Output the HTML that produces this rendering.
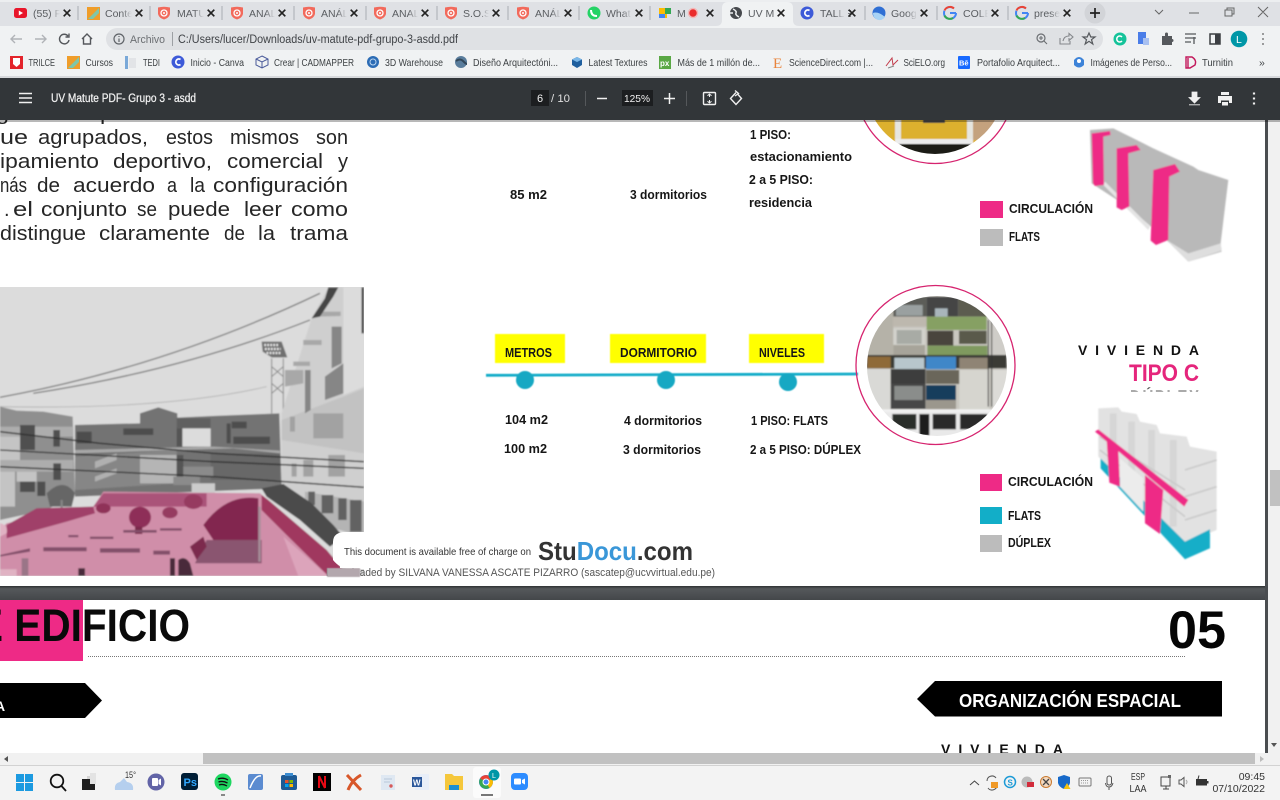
<!DOCTYPE html>
<html><head><meta charset="utf-8"><title>UV Matute PDF</title>
<style>
html,body{margin:0;padding:0;width:1280px;height:800px;overflow:hidden;background:#fff}
svg{display:block;position:absolute;left:0;top:0}
text{font-family:"Liberation Sans",sans-serif;white-space:pre}
.tab{font-size:10.5px;fill:#5a5d61}
.bm{font-size:10.5px;fill:#3c4043}
.b{font-weight:bold;font-size:13px;fill:#161616}
.w{font-size:20px;fill:#262626}
</style></head><body>
<svg width="1280" height="800" viewBox="0 0 1280 800" xmlns="http://www.w3.org/2000/svg">
<defs>
<linearGradient id="fd" x1="0" y1="0" x2="1" y2="0"><stop offset="0" stop-color="#dfe1e5" stop-opacity="0"/><stop offset="1" stop-color="#dfe1e5"/></linearGradient>
<g id="x"><path d="M-3.3-3.3L3.3 3.3M3.3-3.3L-3.3 3.3" stroke="#222" stroke-width="1.7" fill="none"/></g>
<g id="xf"><rect x="-17" y="-8" width="10" height="16" fill="url(#fd)"/><rect x="-7" y="-8" width="3" height="16" fill="#dfe1e5"/><use href="#x"/></g>
<g id="sh"><path d="M-6-5.5Q0-7 6-5.5V1Q5 5 0 6.5Q-5 5-6 1Z" fill="#f26a5c"/><circle r="3" fill="none" stroke="#fff" stroke-width="1.3"/><circle r="1" fill="#fff"/></g>
<g id="G"><circle r="6" fill="none" stroke="#4285f4" stroke-width="2" stroke-dasharray="9 3 9 3 8 6"/><path d="M0 0H6" stroke="#4285f4" stroke-width="2"/><path d="M-5.5-2.5A6 6 0 0 1 4-4.5" stroke="#ea4335" stroke-width="2" fill="none"/><path d="M-5.5 2.5A6 6 0 0 0 3 5" stroke="#34a853" stroke-width="2" fill="none"/></g>
<clipPath id="cC"><circle cx="937" cy="366" r="70"/></clipPath>
<clipPath id="cA"><circle cx="935" cy="84" r="70"/></clipPath>
<clipPath id="cP"><rect x="0" y="287" width="364" height="289"/></clipPath>
<clipPath id="cD"><rect x="1100" y="385" width="110" height="6.500"/></clipPath>
<filter id="bl" x="-5%" y="-5%" width="110%" height="110%"><feGaussianBlur stdDeviation="2.4"/></filter>
<filter id="bs" x="-5%" y="-5%" width="110%" height="110%"><feGaussianBlur stdDeviation="0.5"/></filter>
<linearGradient id="gap" x1="0" y1="0" x2="0" y2="1"><stop offset="0" stop-color="#2e3133"/><stop offset=".2" stop-color="#55585b"/><stop offset="1" stop-color="#44474a"/></linearGradient>
</defs>

<!-- PDF page 1 -->
<rect x="0" y="120" width="1280" height="640" fill="#fff"/>
<!-- left paragraph -->
<g>
<text class="w" x="-4" y="120" textLength="86" lengthAdjust="spacingAndGlyphs">generan</text><text class="w" x="100" y="120" textLength="34" lengthAdjust="spacingAndGlyphs">por</text><text class="w" x="148" y="120" textLength="16" lengthAdjust="spacingAndGlyphs">la</text><text class="w" x="178" y="120" textLength="96" lengthAdjust="spacingAndGlyphs">obtención</text><text class="w" x="288" y="120" textLength="22" lengthAdjust="spacingAndGlyphs">de</text><text class="w" x="322" y="120" textLength="26" lengthAdjust="spacingAndGlyphs">los</text>
<text class="w" x="0" y="144" textLength="28" lengthAdjust="spacingAndGlyphs">ue</text><text class="w" x="38" y="144" textLength="110" lengthAdjust="spacingAndGlyphs">agrupados,</text><text class="w" x="166" y="144" textLength="47" lengthAdjust="spacingAndGlyphs">estos</text><text class="w" x="230" y="144" textLength="69" lengthAdjust="spacingAndGlyphs">mismos</text><text class="w" x="316" y="144" textLength="32" lengthAdjust="spacingAndGlyphs">son</text>
<text class="w" x="0" y="168" textLength="99" lengthAdjust="spacingAndGlyphs">ipamiento</text><text class="w" x="113" y="168" textLength="99" lengthAdjust="spacingAndGlyphs">deportivo,</text><text class="w" x="227" y="168" textLength="96" lengthAdjust="spacingAndGlyphs">comercial</text><text class="w" x="338" y="168" textLength="10" lengthAdjust="spacingAndGlyphs">y</text>
<text class="w" x="0" y="192" textLength="27" lengthAdjust="spacingAndGlyphs">nás</text><text class="w" x="37" y="192" textLength="23" lengthAdjust="spacingAndGlyphs">de</text><text class="w" x="73" y="192" textLength="82" lengthAdjust="spacingAndGlyphs">acuerdo</text><text class="w" x="167" y="192" textLength="10" lengthAdjust="spacingAndGlyphs">a</text><text class="w" x="190" y="192" textLength="15" lengthAdjust="spacingAndGlyphs">la</text><text class="w" x="213" y="192" textLength="135" lengthAdjust="spacingAndGlyphs">configuración</text>
<text class="w" x="4" y="216">.</text><text class="w" x="13" y="216" textLength="20" lengthAdjust="spacingAndGlyphs">el</text><text class="w" x="41" y="216" textLength="86" lengthAdjust="spacingAndGlyphs">conjunto</text><text class="w" x="137" y="216" textLength="20" lengthAdjust="spacingAndGlyphs">se</text><text class="w" x="168" y="216" textLength="62" lengthAdjust="spacingAndGlyphs">puede</text><text class="w" x="244" y="216" textLength="38" lengthAdjust="spacingAndGlyphs">leer</text><text class="w" x="291" y="216" textLength="57" lengthAdjust="spacingAndGlyphs">como</text>
<text class="w" x="0" y="240" textLength="86" lengthAdjust="spacingAndGlyphs">distingue</text><text class="w" x="99" y="240" textLength="111" lengthAdjust="spacingAndGlyphs">claramente</text><text class="w" x="224" y="240" textLength="21" lengthAdjust="spacingAndGlyphs">de</text><text class="w" x="258" y="240" textLength="17" lengthAdjust="spacingAndGlyphs">la</text><text class="w" x="290" y="240" textLength="58" lengthAdjust="spacingAndGlyphs">trama</text>
</g>

<!-- photo -->
<g clip-path="url(#cP)"><g transform="translate(0 280) scale(.3333)" filter="url(#bl)">
<rect x="-20" y="0" width="1140" height="910" fill="#dcdcdc"/>
<path d="M0 352Q500 260 960 40M100 340Q550 270 930 120" fill="none" stroke="#6d6d6d" stroke-width="3.500"/>
<path d="M0 380Q500 390 800 320" fill="none" stroke="#b0b0b0" stroke-width="2.500"/>
<!-- tower -->
<path d="M785 185H845L862 232H815L788 215Z" fill="#6f6f6f"/><path d="M793 195H838M795 207H842M800 219H845" stroke="#f2f2f2" stroke-width="7" stroke-dasharray="5 4"/>
<path d="M815 235L815 400M850 235L850 400M815 260L850 290M850 260L815 290M815 310L850 340M850 310L815 340" stroke="#888" stroke-width="3" fill="none"/>
<!-- left building -->
<path d="M0 380L50 392 130 395 218 410 225 640 140 690 0 720Z" fill="#8f8f8f"/>
<path d="M0 440H220V470H0ZM0 540H220V575H0Z" fill="#adadad"/><path d="M0 470H60V540H0ZM50 575H110V605H50ZM0 575H45V680H0Z" fill="#c4c4c4"/>
<path d="M60 435H105V510H60ZM160 450H180V500H160ZM160 550H183V600H160ZM112 605H136V648H112ZM60 605H105V636H60Z" fill="#505050"/>
<!-- center -->
<path d="M225 435L420 430V400L475 382 532 400V413L640 408 838 400 845 625 225 650Z" fill="#737373"/>
<path d="M225 530L530 510V610L225 630Z" fill="#868686"/><path d="M420 525H530V610H420Z" fill="#b5b5b5"/>
<path d="M530 415H632V445H530Z" fill="#606060"/><path d="M547 445H632V500H547Z" fill="#dcdcdc"/>
<path d="M530 445H547V500H530ZM530 525H550V590H530Z" fill="#555"/>
<path d="M632 520H840V600H632Z" fill="#686868"/><path d="M700 470H810V492H700ZM695 425H740V445H695ZM370 445H460V465H370ZM230 455H275V490H230ZM680 430H692V490H680Z" fill="#4e4e4e"/>
<path d="M225 520L700 505 840 520V512L640 500 225 510Z" fill="#a8a8a8"/>
<path d="M285 545L350 520V540L285 565ZM285 590L350 565V580L285 605Z" fill="#b0b0b0"/>
<path d="M520 590H600V615H520ZM550 560H640V590H550Z" fill="#8b8b8b"/><rect x="575" y="610" width="70" height="30" fill="#ccc"/>
<!-- right building -->
<path d="M845 400L935 115 985 22H1092V770L980 730 845 620Z" fill="#cfcfcf"/>
<path d="M1030 22H1092V320L1030 345Z" fill="#dcdcdc"/><path d="M1030 350L1092 325V520L845 480V420Z" fill="#c2c2c2"/>
<path d="M995 140H1025V250L995 265ZM915 270H932V390L915 400ZM975 290L1030 250V340L975 360Z" fill="#868686"/>
<path d="M950 95H1022V108L950 110ZM910 180H965V195H910ZM880 245H930V258H880ZM855 270H910V310L855 320Z" fill="#a8a8a8"/>
<path d="M935 115L975 55 985 22H1015L1000 50 960 110Z" fill="#444"/><path d="M1085 22H1092V160H1085Z" fill="#333"/>
<path d="M985 525H1035V590H985ZM940 400H1030V475H940ZM870 410H885V455H870ZM910 540H940V590H910ZM875 550H890V590H875Z" fill="#a2a2a2"/>
<path d="M915 635L1092 665V770L1000 745 915 690Z" fill="#b4b4b4"/><path d="M1015 655H1040V720H1015ZM1050 660H1085V755H1050ZM965 645H1000V700H965ZM925 635H945V675H925Z" fill="#626262"/>
<path d="M0 455L300 490 640 520 1092 545M0 510L640 545 1092 565M0 560L640 590 1092 622" fill="none" stroke="#2e2e2e" stroke-width="4"/>
<!-- shrubs next to building -->
<path d="M785 625L850 612 935 670 1000 735 1030 770 990 800 900 720 800 650Z" fill="#4b4b4b"/>
<path d="M140 640Q190 590 225 640L215 680H150Z" fill="#666"/><rect x="182" y="660" width="6" height="120" fill="#888"/>
<!-- plaza -->
<path d="M0 750L20 730 280 680 310 635 780 640 870 720 1000 850 1045 888H0Z" fill="#d08ea9"/>
<path d="M310 640H620V680H280Z" fill="#aa5379"/>
<path d="M20 735L110 685 280 680 285 700 200 725 20 775Z" fill="#a03f69"/>
<path d="M785 645L805 660 980 810 1045 888H985L860 765 785 690Z" fill="#a0395f"/>
<path d="M850 770L985 888H895Z" fill="#dca4bb"/>
<ellipse cx="420" cy="712" rx="33" ry="32" fill="#8e2f58"/><rect x="405" y="740" width="22" height="22" fill="#7a2a4c"/>
<ellipse cx="510" cy="698" rx="23" ry="17" fill="#963a61"/><ellipse cx="580" cy="665" rx="28" ry="22" fill="#963a61"/>
<ellipse cx="310" cy="685" rx="22" ry="15" fill="#8f3159"/>
<path d="M610 735Q680 640 775 655V780H640Z" fill="#822650"/><path d="M620 780H785V850H585Z" fill="#8a5570"/>
<path d="M570 800L610 770 620 800 590 840Z" fill="#7c2a4e"/>
<path d="M130 802H260V814H130ZM300 805H420V818H300ZM370 750H470V758H370ZM205 765H235V772H205ZM270 770H340V777H270ZM460 812H510V824H460ZM480 745H545V752H480ZM0 825L90 805V815L0 830Z" fill="#83506a"/>
<rect x="775" y="680" width="7" height="165" fill="#a68f9a"/>
<path d="M510 835H525V888H510ZM535 840Q555 825 570 850L580 888H535ZM235 865H255V888H235Z" fill="#4a2c3a"/>
<path d="M0 730Q25 735 20 760L0 770ZM0 830V888H50V868H0Z" fill="#e0b2c3"/><rect x="65" y="835" width="20" height="53" fill="#9a7587"/>
</g></g>

<!-- timeline -->
<g filter="url(#bs)">
<rect x="495" y="334" width="70" height="29" fill="#ffff00"/><rect x="610" y="334" width="96" height="29" fill="#ffff00"/><rect x="749" y="334" width="75" height="29" fill="#ffff00"/>
<path d="M486 375.300L858 374" stroke="#14adc9" stroke-width="2.800"/>
<circle cx="525" cy="380" r="9" fill="#14a8c3"/><circle cx="666" cy="380" r="9" fill="#14a8c3"/><circle cx="788" cy="382" r="9" fill="#14a8c3"/>
</g>
<text class="b" x="505" y="357" textLength="47" lengthAdjust="spacingAndGlyphs" style="font-size:12.500px">METROS</text>
<text class="b" x="620" y="357" textLength="77" lengthAdjust="spacingAndGlyphs" style="font-size:12.500px">DORMITORIO</text>
<text class="b" x="759" y="357" textLength="46" lengthAdjust="spacingAndGlyphs" style="font-size:12.500px">NIVELES</text>
<text class="b" x="505" y="424" textLength="43" lengthAdjust="spacingAndGlyphs">104 m2</text><text class="b" x="504" y="453" textLength="43" lengthAdjust="spacingAndGlyphs">100 m2</text>
<text class="b" x="624" y="425" textLength="78" lengthAdjust="spacingAndGlyphs">4 dormitorios</text><text class="b" x="623" y="454" textLength="78" lengthAdjust="spacingAndGlyphs">3 dormitorios</text>
<text class="b" x="751" y="425" textLength="77" lengthAdjust="spacingAndGlyphs">1 PISO: FLATS</text><text class="b" x="750" y="454" textLength="111" lengthAdjust="spacingAndGlyphs">2 a 5 PISO: DÚPLEX</text>
<text class="b" x="510" y="199" textLength="37" lengthAdjust="spacingAndGlyphs">85 m2</text><text class="b" x="630" y="199" textLength="77" lengthAdjust="spacingAndGlyphs">3 dormitorios</text>
<text class="b" x="750" y="139" textLength="41" lengthAdjust="spacingAndGlyphs">1 PISO:</text><text class="b" x="750" y="161" textLength="102" lengthAdjust="spacingAndGlyphs">estacionamiento</text><text class="b" x="749" y="184" textLength="64" lengthAdjust="spacingAndGlyphs">2 a 5 PISO:</text><text class="b" x="749" y="207" textLength="63" lengthAdjust="spacingAndGlyphs">residencia</text>

<!-- top circle -->
<g clip-path="url(#cA)" filter="url(#bs)">
<rect x="860" y="100" width="150" height="60" fill="#dcb02e"/>
<rect x="973" y="100" width="40" height="40" fill="#c4a27e"/>
<rect x="895" y="100" width="6" height="42" fill="#e6e6e0"/><rect x="967" y="100" width="6" height="42" fill="#e6e6e0"/><rect x="895" y="139" width="78" height="5" fill="#ececec"/>
<rect x="860" y="144" width="150" height="14" fill="#1f1c14"/><rect x="923" y="119" width="22" height="4" fill="#4a4a4a"/>
</g>
<circle cx="935" cy="84" r="79.500" fill="none" stroke="#d6246f" stroke-width="1.300"/>

<!-- bottom circle -->
<g clip-path="url(#cC)"><g transform="translate(850 290) scale(.3333)" filter="url(#bl)">
<rect x="40" y="10" width="440" height="440" fill="#c9c7c0"/>
<rect x="40" y="10" width="90" height="190" fill="#b5b2a8"/><rect x="415" y="10" width="60" height="190" fill="#cfcdc8"/>
<rect x="130" y="20" width="100" height="60" fill="#5b5d58"/><rect x="130" y="80" width="100" height="30" fill="#bdb8ae"/>
<rect x="138" y="45" width="80" height="32" fill="#9aa0a0"/>
<rect x="230" y="20" width="95" height="60" fill="#444"/><rect x="255" y="55" width="38" height="35" fill="#a9b5bb"/>
<rect x="325" y="20" width="85" height="60" fill="#5c5c50"/><rect x="230" y="80" width="180" height="40" fill="#86a063"/>
<rect x="130" y="115" width="95" height="50" fill="#d2d2cc"/><rect x="140" y="120" width="75" height="42" fill="#a8aba5"/>
<rect x="130" y="165" width="95" height="30" fill="#a7a49a"/>
<rect x="232" y="122" width="78" height="45" fill="#4a453c"/><rect x="327" y="122" width="83" height="40" fill="#5a5a4b"/>
<rect x="232" y="167" width="180" height="28" fill="#7f9a5e"/>
<rect x="50" y="195" width="420" height="40" fill="#3a3a36"/>
<rect x="52" y="200" width="70" height="35" fill="#8f6b38"/><rect x="133" y="203" width="90" height="34" fill="#b8c6cc"/>
<rect x="228" y="200" width="90" height="38" fill="#3f87c8"/><rect x="328" y="203" width="85" height="34" fill="#8f8474"/>
<rect x="50" y="237" width="72" height="125" fill="#d9d9d6"/><rect x="122" y="237" width="105" height="45" fill="#3d3d3d"/>
<rect x="228" y="240" width="100" height="42" fill="#6a665a"/><rect x="328" y="240" width="90" height="120" fill="#d6d5cf"/><rect x="428" y="240" width="45" height="120" fill="#dcdbd7"/>
<rect x="122" y="282" width="105" height="75" fill="#474747"/><rect x="133" y="288" width="85" height="42" fill="#8a8d8b"/>
<rect x="228" y="285" width="90" height="45" fill="#123c5c"/><rect x="228" y="330" width="90" height="28" fill="#9b978d"/>
<rect x="60" y="358" width="410" height="12" fill="#f2f2f2"/><rect x="60" y="366" width="410" height="75" fill="#e9e9e9"/>
<rect x="127" y="372" width="72" height="46" fill="#2c2f2c"/><rect x="208" y="372" width="30" height="65" fill="#1f1f1f"/><rect x="248" y="372" width="70" height="46" fill="#2a2a2a"/><rect x="330" y="372" width="82" height="46" fill="#2c2c2c"/>
<path d="M415 90V350M425 90V350" stroke="#333" stroke-width="3"/>
</g></g>
<circle cx="935.500" cy="365" r="79.500" fill="none" stroke="#d6246f" stroke-width="1.300"/>

<!-- titles -->
<text x="1078" y="355" textLength="121" style="font-size:14px;font-weight:bold;fill:#111">VIVIENDA</text>
<text x="1129" y="381" textLength="70" lengthAdjust="spacingAndGlyphs" style="font-size:24px;font-weight:bold;fill:#e5257c">TIPO C</text>
<g clip-path="url(#cD)"><text x="1130" y="400.500" textLength="69" style="font-size:15px;font-weight:bold;fill:#555">DÚPLEX</text></g>

<!-- legends -->
<rect x="980" y="201" width="23" height="17" fill="#ee2a86"/><rect x="980" y="229" width="23" height="17" fill="#bcbcbc"/>
<text class="b" x="1009" y="213" textLength="84" lengthAdjust="spacingAndGlyphs" style="font-size:12.500px">CIRCULACIÓN</text><text class="b" x="1009" y="241" textLength="31" lengthAdjust="spacingAndGlyphs" style="font-size:12.500px">FLATS</text>
<rect x="980" y="474" width="22" height="17" fill="#ee2a86"/><rect x="980" y="507" width="22" height="17" fill="#12aec8"/><rect x="980" y="535" width="22" height="17" fill="#bcbcbc"/>
<text class="b" x="1008" y="486" textLength="85" lengthAdjust="spacingAndGlyphs" style="font-size:12.500px">CIRCULACIÓN</text><text class="b" x="1008" y="520" textLength="33" lengthAdjust="spacingAndGlyphs" style="font-size:12.500px">FLATS</text><text class="b" x="1008" y="547" textLength="43" lengthAdjust="spacingAndGlyphs" style="font-size:12.500px">DÚPLEX</text>

<!-- diagram A -->
<g transform="translate(850 120) scale(.3333)" filter="url(#bl)">
<path d="M720 30L790 25 910 85 1030 140 1045 150 1135 180 1112 370 1115 395 1015 425 960 370 840 265 725 190Z" fill="#b9b9b9"/>
<path d="M950 360L1015 400 1112 370 1115 392 1015 425Z" fill="#dedede"/>
<path d="M765 185L900 320 895 330 760 195Z" fill="#e4e4e4"/>
<path d="M725 40L780 33 782 45 760 50 762 195 735 198 729 190Z" fill="#ee2a86"/>
<path d="M800 85L860 75 872 90 835 100 838 260 815 270 800 262Z" fill="#ee2a86"/>
<path d="M910 150L975 132 990 155 958 170 955 360 918 375 902 362Z" fill="#ee2a86"/>
</g>
<!-- diagram C -->
<g transform="translate(850 290) scale(.3333)" filter="url(#bl)">
<path d="M745 355L805 352 815 365 860 372 870 395 920 405 930 430 1010 440 1020 470 1100 485 1100 720 1005 760 745 500Z" fill="#e2e2e2"/>
<path d="M780 370H800V520H780ZM835 395H855V580H835ZM895 420H915V640H895ZM960 450H980V710H960Z" fill="#d6d6d6"/>
<path d="M750 440L1005 600M750 480L1005 680M1005 540L1100 510M1005 620L1100 590M1005 690L1100 660" stroke="#cacaca" stroke-width="5" fill="none"/>
<path d="M752 505L1005 755 1080 718 1080 775 1005 808 752 535Z" fill="#12aec8"/>
<path d="M810 505L880 565V665L810 590Z" fill="#ececec"/>
<path d="M735 425L745 418 1015 630 1003 650Z" fill="#ee2a86"/>
<path d="M770 450L805 480 810 590 778 578Z" fill="#ee2a86"/><path d="M885 555L940 600 930 732 885 700Z" fill="#ee2a86"/>
</g>

<!-- studocu -->
<path d="M333 570V542Q333 532 346 532H705V569H352Q340 569 333 560Z" fill="#fff"/>
<text x="326" y="576" textLength="389" lengthAdjust="spacingAndGlyphs" style="font-size:11px;fill:#555">Downloaded by SILVANA VANESSA ASCATE PIZARRO (sascatep@ucvvirtual.edu.pe)</text>
<rect x="327" y="568" width="33" height="9" fill="#b3a7ad" filter="url(#bs)"/>
<rect x="340" y="562" width="24" height="6" fill="#fff"/>
<text x="344" y="555" textLength="187" lengthAdjust="spacingAndGlyphs" style="font-size:10.400px;fill:#333">This document is available free of charge on</text>
<text x="538" y="560" textLength="155" lengthAdjust="spacingAndGlyphs" style="font-size:26px;font-weight:bold;fill:#333">Stu<tspan fill="#3a97d8">Docu</tspan>.com</text>

<!-- gap + page 2 -->
<rect x="0" y="586" width="1265" height="14" fill="url(#gap)"/>
<rect x="0" y="600" width="1265" height="160" fill="#fff"/>
<rect x="0" y="600" width="83" height="61" fill="#ee2a86"/>
<text x="-24" y="641" textLength="214" lengthAdjust="spacingAndGlyphs" style="font-size:45px;font-weight:bold;fill:#0a0a0a">E EDIFICIO</text>
<path d="M88 656.500H1186" stroke="#777" stroke-width="1" stroke-dasharray="1 1"/>
<text x="1168" y="648" textLength="58" lengthAdjust="spacingAndGlyphs" style="font-size:53px;font-weight:bold;fill:#050505">05</text>
<path d="M0 683H85L102 700.500 85 718H0Z" fill="#000"/>
<text x="-5" y="711" style="font-size:14px;font-weight:bold;fill:#fff">A</text>
<path d="M917 699L935 681H1222V716.500H935Z" fill="#000"/>
<text x="959" y="707" textLength="222" lengthAdjust="spacingAndGlyphs" style="font-size:18px;font-weight:bold;fill:#fff">ORGANIZACIÓN ESPACIAL</text>
<text x="941" y="754" textLength="122" style="font-size:14px;font-weight:bold;fill:#111">VIVIENDA</text>

<!-- right gutter + v scrollbar -->
<rect x="1265" y="120" width="3" height="633" fill="#4a4d50"/>
<rect x="1268" y="120" width="12" height="645" fill="#f1f1f1"/>
<rect x="1270" y="470" width="10" height="36" fill="#c1c1c1"/>
<path d="M1271 743H1277L1274 747Z" fill="#555"/>
<!-- h scrollbar -->
<rect x="0" y="753" width="1268" height="12" fill="#f1f1f1"/>
<rect x="203" y="753" width="1052" height="11" fill="#c1c1c1"/>
<path d="M8 756V762L4 759Z" fill="#555"/><path d="M1260 756V762L1264 759Z" fill="#bbb"/>

<!-- Chrome -->
<rect x="0" y="0" width="1280" height="27" fill="#dfe1e5"/>
<rect x="0" y="26" width="1280" height="52" fill="#f0f2f3"/>
<rect x="0" y="0" width="1280" height="2" fill="#eceef0"/>
<path d="M78 6V20M150 6V20M222 6V20M294 6V20M366 6V20M437 6V20M508 6V20M579 6V20M650 6V20M865 6V20M937 6V20M1008 6V20" stroke="#aaadb2"/>
<path d="M716 26Q722 26 722 20V8Q722 2 728 2H787Q793 2 793 8V20Q793 26 799 26Z" fill="#f0f2f3"/>
<!-- tab labels -->
<text class="tab" x="33" y="17">(55) P</text><text class="tab" x="105" y="17">Conte</text><text class="tab" x="177" y="17">MATU</text><text class="tab" x="249" y="17">ANAL</text><text class="tab" x="321" y="17">ANÁL</text><text class="tab" x="392" y="17">ANAL</text><text class="tab" x="463" y="17">S.O.S</text><text class="tab" x="535" y="17">ANÁL</text><text class="tab" x="606" y="17">What</text><text class="tab" x="677" y="17">M</text><text class="tab" x="748" y="17">UV M</text><text class="tab" x="820" y="17">TALLE</text><text class="tab" x="891" y="17">Goog</text><text class="tab" x="963" y="17">COLE</text><text class="tab" x="1034" y="17">prese</text>
<use href="#xf" x="67" y="13"/><use href="#xf" x="139" y="13"/><use href="#xf" x="211" y="13"/><use href="#xf" x="282" y="13"/><use href="#xf" x="354" y="13"/><use href="#xf" x="425" y="13"/><use href="#xf" x="496" y="13"/><use href="#xf" x="568" y="13"/><use href="#xf" x="639" y="13"/><use href="#x" x="710" y="13"/><use href="#x" x="781" y="13"/><use href="#xf" x="852" y="13"/><use href="#xf" x="924" y="13"/><use href="#xf" x="995" y="13"/><use href="#xf" x="1067" y="13"/>
<!-- tab icons -->
<g transform="translate(0 -2)">
<rect x="14" y="10" width="13" height="10" rx="2.500" fill="#e8162b"/><path d="M18.800 12.500V17.500L23 15Z" fill="#fff"/>
<rect x="87" y="9" width="13" height="13" fill="#ef9d2a"/><path d="M88 21L99 10V15L93 21Z" fill="#7fc6a8"/>
<use href="#sh" x="164" y="15"/><use href="#sh" x="237" y="15"/><use href="#sh" x="309" y="15"/><use href="#sh" x="380" y="15"/><use href="#sh" x="451" y="15"/><use href="#sh" x="523" y="15"/>
<circle cx="594" cy="15" r="6.500" fill="#25d366"/><path d="M591 12Q591 18 597 18" stroke="#fff" stroke-width="2" fill="none"/>
<rect x="659" y="10" width="8" height="10" fill="#fbbc04"/><rect x="665" y="10" width="6" height="6" fill="#34a853"/><rect x="659" y="16" width="6" height="4" fill="#4285f4"/>
<circle cx="693" cy="15" r="4.500" fill="#ea2c2c" stroke="#f3b8b8" stroke-width="1.500"/>
<circle cx="736" cy="15" r="6" fill="#46494d"/><path d="M733 11Q737 13 736 15T739 19M730 15H733" stroke="#f0f2f3" stroke-width="1.500" fill="none"/>
<circle cx="807" cy="15" r="6.500" fill="#3d5ad8"/><path d="M809.500 12.500A3 3 0 1 0 809.500 17.500" stroke="#fff" stroke-width="1.700" fill="none"/>
<circle cx="879" cy="15" r="6.500" fill="#2f6fd4"/><path d="M873 15Q878 13 885 19A6.500 6.500 0 0 1 873 15Z" fill="#a8d3f5"/>
<use href="#G" x="950" y="15"/><use href="#G" x="1022" y="15"/>
</g>
<circle cx="1095" cy="13" r="10.500" fill="#d2d4d8"/><path d="M1090 13H1100M1095 8V18" stroke="#222" stroke-width="1.700"/>
<!-- window controls -->
<path d="M1155 10L1159 14 1163 10M1189 13H1199M1225 10H1232V16H1225ZM1227 10V8H1234V14H1232M1258 7L1268 17M1268 7L1258 17" stroke="#666" fill="none"/>

<!-- nav -->
<path d="M22 39H11M15 35L11 39 15 43" stroke="#b0b3b7" stroke-width="1.400" fill="none"/>
<path d="M35 39H46M42 35L46 39 42 43" stroke="#b0b3b7" stroke-width="1.400" fill="none"/>
<path d="M68 36A4.800 4.800 0 1 0 69 40M69 33.500V37H65.500" stroke="#55585c" stroke-width="1.400" fill="none"/>
<path d="M82 39L87 34 92 39M83.500 38V44H90.500V38" stroke="#55585c" stroke-width="1.400" fill="none"/>
<rect x="106" y="28" width="997" height="22" rx="11" fill="#dfe1e4"/>
<circle cx="119" cy="39" r="5" fill="none" stroke="#5f6368" stroke-width="1.200"/><path d="M119 38.500V42M119 36V37" stroke="#5f6368" stroke-width="1.200"/>
<text x="130" y="43" textLength="35" lengthAdjust="spacingAndGlyphs" style="font-size:11px;fill:#6b6e72">Archivo</text>
<rect x="172" y="32" width="1" height="14" fill="#9da0a4"/>
<text x="178" y="43" textLength="280" lengthAdjust="spacingAndGlyphs" style="font-size:11.500px;fill:#3f4246">C:/Users/lucer/Downloads/uv-matute-pdf-grupo-3-asdd.pdf</text>
<circle cx="1041" cy="38" r="4" fill="none" stroke="#6b6e72" stroke-width="1.200"/><path d="M1044 41L1047 44M1039 38H1043M1041 36V40" stroke="#6b6e72" stroke-width="1.100"/>
<path d="M1060 38V44H1070V41M1063 41Q1064 36 1069 36V33.500L1073 37 1069 40.500V38" stroke="#85888c" stroke-width="1.100" fill="none"/>
<path d="M1089 33L1090.800 37H1095L1091.500 39.700 1092.800 44 1089 41.300 1085.200 44 1086.500 39.700 1083 37H1087.200Z" stroke="#55585c" stroke-width="1.200" fill="none"/>
<circle cx="1120" cy="39" r="6.500" fill="#15c39a"/><path d="M1122 37A3 3 0 1 0 1122 41" stroke="#fff" stroke-width="1.500" fill="none"/>
<rect x="1138" y="32" width="8" height="12" fill="#4a7de8"/><rect x="1143" y="38" width="6" height="7" fill="#a8c0f0"/>
<path d="M1162 36H1165V34A1.500 1.500 0 0 1 1168 34V36H1172V39A1.500 1.500 0 0 1 1172 42V45H1162Z" fill="#55585c"/>
<path d="M1185 34H1196M1185 38H1196M1185 42H1191M1194 37V44" stroke="#55585c" stroke-width="1.300" fill="none"/>
<rect x="1210" y="34" width="10" height="10" fill="none" stroke="#3c3f43" stroke-width="1.500"/><rect x="1215" y="34" width="5" height="10" fill="#3c3f43"/>
<circle cx="1239" cy="39" r="8.300" fill="#0097a7"/><text x="1236" y="43" style="font-size:10.500px;fill:#fff">L</text>
<path d="M1263 33.500V34.500M1263 38.500V39.500M1263 43.500V44.500" stroke="#444" stroke-width="2"/>

<!-- bookmarks -->
<rect x="10" y="56" width="13" height="13" fill="#e3242b"/><path d="M13 58H20V64L16.500 67 13 64Z" fill="#fff"/>
<rect x="67" y="56" width="13" height="13" fill="#ef9d2a"/><path d="M68 68L79 57V62L73 68Z" fill="#7fc6a8"/>
<rect x="125" y="56" width="3" height="13" fill="#7aa9d8"/><rect x="129" y="58" width="7" height="10" fill="#e2e4e7"/>
<circle cx="178" cy="62" r="6.500" fill="#3d5ad8"/><path d="M180.500 59.500A3 3 0 1 0 180.500 64.500" stroke="#fff" stroke-width="1.700" fill="none"/>
<path d="M262 56L268 59V65L262 68 256 65V59ZM256 59L262 62 268 59M262 62V68" stroke="#4a5a9a" fill="none"/>
<circle cx="373" cy="62" r="6" fill="#2c6cb5"/><circle cx="373" cy="62" r="3" fill="none" stroke="#bcd6f0"/>
<circle cx="461" cy="62" r="6" fill="#5a7d9c"/><path d="M456 61Q460 58 463 61T467 64" stroke="#33485a" stroke-width="2" fill="none"/>
<path d="M577 57L582 59.500V65L577 68 572 65V59.500Z" fill="#1f5f9e"/><path d="M572 59.500L577 62 582 59.500 577 57Z" fill="#7ab7e8"/>
<rect x="659" y="56" width="12" height="13" fill="#5aa845"/><text x="660" y="66" style="font-size:8px;font-weight:bold;fill:#fff">px</text>
<text x="773" y="68" style="font-size:15px;fill:#e8843c;font-family:'Liberation Serif',serif">E</text>
<path d="M886 66L892 58 893 65 898 60" stroke="#c23b4a" fill="none"/><path d="M888 68L894 66" stroke="#888"/>
<rect x="958" y="56" width="12" height="13" rx="1" fill="#1769ff"/><text x="959" y="65.500" style="font-size:7.500px;font-weight:bold;fill:#fff">Bē</text>
<path d="M1074 60Q1079 54 1084 60V65Q1079 70 1074 65Z" fill="#3d83d8"/><circle cx="1079" cy="61" r="2" fill="#fff"/>
<path d="M1186 57H1192Q1197 60 1195 65L1190 68H1186ZM1188 58V68" stroke="#c2185b" stroke-width="1.400" fill="none"/>
<text class="bm" x="28.500" y="66" textLength="26.500" lengthAdjust="spacingAndGlyphs">TRILCE</text><text class="bm" x="85.500" y="66" textLength="27.500" lengthAdjust="spacingAndGlyphs">Cursos</text><text class="bm" x="143" y="66" textLength="17" lengthAdjust="spacingAndGlyphs">TEDI</text><text class="bm" x="190.500" y="66" textLength="53.500" lengthAdjust="spacingAndGlyphs">Inicio - Canva</text><text class="bm" x="274" y="66" textLength="80" lengthAdjust="spacingAndGlyphs">Crear | CADMAPPER</text><text class="bm" x="385" y="66" textLength="58" lengthAdjust="spacingAndGlyphs">3D Warehouse</text><text class="bm" x="473" y="66" textLength="85" lengthAdjust="spacingAndGlyphs">Diseño Arquitectóni...</text><text class="bm" x="588.500" y="66" textLength="59" lengthAdjust="spacingAndGlyphs">Latest Textures</text><text class="bm" x="677.500" y="66" textLength="82.500" lengthAdjust="spacingAndGlyphs">Más de 1 millón de...</text><text class="bm" x="789" y="66" textLength="84" lengthAdjust="spacingAndGlyphs">ScienceDirect.com |...</text><text class="bm" x="903.500" y="66" textLength="41.500" lengthAdjust="spacingAndGlyphs">SciELO.org</text><text class="bm" x="977" y="66" textLength="83" lengthAdjust="spacingAndGlyphs">Portafolio Arquitect...</text><text class="bm" x="1090.500" y="66" textLength="81.500" lengthAdjust="spacingAndGlyphs">Imágenes de Perso...</text><text class="bm" x="1202" y="66" textLength="31" lengthAdjust="spacingAndGlyphs">Turnitin</text><text class="bm" x="1259" y="66">»</text>

<!-- PDF toolbar -->
<rect x="0" y="76" width="1280" height="2" fill="#d7d9dc"/>
<rect x="0" y="78" width="1280" height="42" fill="#323639"/>
<rect x="0" y="120" width="1280" height="2" fill="#000" opacity=".28"/>
<path d="M19 93.500H32M19 98H32M19 102.500H32" stroke="#f1f1f1" stroke-width="1.500"/>
<text x="51" y="102" textLength="145" lengthAdjust="spacingAndGlyphs" style="font-size:11.500px;fill:#f1f1f1;stroke:#f1f1f1;stroke-width:.25">UV Matute PDF- Grupo 3 - asdd</text>
<rect x="531" y="90" width="18" height="16" fill="#1c1e20"/>
<text x="537" y="102" style="font-size:11px;fill:#f1f1f1">6</text><text x="551" y="102" textLength="19" lengthAdjust="spacingAndGlyphs" style="font-size:11px;fill:#e0e0e0">/ 10</text>
<rect x="585" y="91" width="1" height="15" fill="#55585b"/>
<path d="M597 98.500H607" stroke="#f1f1f1" stroke-width="1.500"/>
<rect x="622" y="90" width="31" height="16" fill="#1c1e20"/>
<text x="624" y="102" textLength="26" lengthAdjust="spacingAndGlyphs" style="font-size:10.500px;fill:#f1f1f1">125%</text>
<path d="M664 98.500H675M669.500 93V104" stroke="#f1f1f1" stroke-width="1.500"/>
<rect x="686" y="91" width="1" height="15" fill="#55585b"/>
<rect x="703.500" y="92.500" width="12" height="12" rx="1" fill="none" stroke="#f1f1f1" stroke-width="1.400"/><path d="M709.500 94.500V97M707.500 95.800L709.500 94 711.500 95.800M709.500 102.500V100M707.500 101.200L709.500 103 711.500 101.200" stroke="#f1f1f1" fill="none"/>
<path d="M736 92.500L730.500 98.500 736 104.500 741.500 98.500 738 94.500" stroke="#f1f1f1" stroke-width="1.400" fill="none"/><path d="M735 90.500L738.500 93.500 735 96" stroke="#f1f1f1" stroke-width="1.300" fill="none"/>
<path d="M1192 92H1197V97.500H1200L1194.500 103 1189 97.500H1192ZM1189 104.800H1200" fill="#f1f1f1" stroke="#f1f1f1" stroke-width=".8"/>
<path d="M1221 92H1229V95H1221ZM1218 96H1232V103H1229V100.500H1221V103H1218ZM1222 102H1228V105.500H1222Z" fill="#f1f1f1"/>
<path d="M1254 92.500V94.500M1254 97.500V99.500M1254 102.500V104.500" stroke="#f1f1f1" stroke-width="2.200"/>

<!-- Taskbar -->
<rect x="0" y="765" width="1280" height="35" fill="#f3f3f3"/>
<rect x="0" y="765" width="1280" height="1" fill="#d2d2d2"/>
<path d="M16 774H24V782H16ZM25 774H33V782H25ZM16 783H24V791H16ZM25 783H33V791H25Z" fill="#1c9ae0"/>
<circle cx="57" cy="781" r="6.300" fill="none" stroke="#111" stroke-width="1.800"/><path d="M61.500 786L66 791" stroke="#111" stroke-width="1.800"/>
<rect x="87" y="776" width="8" height="8" fill="#d5d5d5"/><rect x="82" y="779" width="13" height="11" fill="#1f1f1f"/><rect x="90" y="773" width="6" height="11" fill="#e3e3e3"/>
<path d="M115 790Q114 783 120 782L124 778 127 782Q134 783 133 790Z" fill="#b5cfee"/>
<text x="125" y="778" textLength="11" lengthAdjust="spacingAndGlyphs" style="font-size:9.500px;fill:#333">15°</text>
<circle cx="156" cy="782" r="8.500" fill="#6264a7"/><rect x="152" y="778" width="6" height="8" rx="1" fill="#fff"/><path d="M158.500 780L161 778.500V785.500L158.500 784Z" fill="#fff"/>
<rect x="181" y="773" width="17" height="17" rx="3" fill="#001e36"/><text x="183.500" y="786" style="font-size:11px;font-weight:bold;fill:#31a8ff">Ps</text>
<circle cx="223" cy="782" r="8.500" fill="#1ed760"/><path d="M218 779Q223 777 228 780M218.500 782Q223 780.500 227.500 783M219 785Q223 783.500 227 786" stroke="#111" stroke-width="1.300" fill="none"/>
<rect x="221" y="794" width="4" height="2" fill="#888"/>
<rect x="248" y="774" width="15" height="16" rx="2" fill="#5b8bd0"/><path d="M250 788Q255 775 261 776" stroke="#fff" stroke-width="1.500" fill="none"/>
<rect x="281" y="775" width="16" height="15" rx="2" fill="#1e5a94"/><rect x="285" y="773" width="8" height="3" fill="#3a8bd0"/><path d="M285 780H288.500V783H285Z" fill="#e8532b"/><path d="M289.500 780H293V783H289.500Z" fill="#7fba00"/><path d="M285 784H288.500V787H285Z" fill="#00a4ef"/><path d="M289.500 784H293V787H289.500Z" fill="#ffb900"/>
<rect x="313" y="773" width="18" height="18" fill="#000"/><path d="M319 776V788M325 776V788M319 776L325 788" stroke="#e50914" stroke-width="2"/>
<path d="M347 775L361 790M361 775Q352 780 348 790" stroke="#d8572a" stroke-width="3" fill="none"/>
<rect x="381" y="775" width="14" height="15" fill="#dfe8f2"/><circle cx="391" cy="786" r="1.700" fill="#d65a5a"/><path d="M384 779H392M384 782H390" stroke="#b8c8da"/>
<rect x="415" y="774" width="14" height="16" rx="1" fill="#e8eef8"/><rect x="412" y="777" width="10" height="10" fill="#2b579a"/><text x="413" y="785.500" style="font-size:8px;font-weight:bold;fill:#fff">W</text>
<path d="M445 774H452L454 776H463V790H445Z" fill="#f5c73b"/><rect x="449" y="785" width="10" height="5" fill="#1b8fd1"/>
<rect x="473" y="767" width="28" height="31" rx="3" fill="#fbfbfb"/>
<circle cx="486" cy="782" r="7" fill="#4285f4"/><path d="M480 778.500A7 7 0 0 1 492 778.500L486 782Z" fill="#ea4335"/><path d="M480 778.500A7 7 0 0 0 489.500 788L486 782Z" fill="#34a853"/><path d="M492 778.500A7 7 0 0 1 489.500 788L486 782Z" fill="#fbbc04"/><circle cx="486" cy="782" r="3" fill="#4285f4" stroke="#fff"/>
<circle cx="494" cy="775" r="5.500" fill="#0097a7"/><text x="492" y="778" style="font-size:7px;fill:#fff">L</text>
<rect x="481" y="794" width="12" height="2" fill="#777"/>
<rect x="511" y="773" width="17" height="17" rx="4" fill="#2d8cff"/><rect x="514" y="778.500" width="7" height="6" rx="1" fill="#fff"/><path d="M522 780L525 778.500V784.500L522 783Z" fill="#fff"/>

<!-- tray -->
<path d="M970 785L974.500 781 979 785" stroke="#444" fill="none"/>
<path d="M987 781A5 5 0 0 1 996 778M997 785A5 5 0 0 1 988 788" stroke="#555" fill="none"/><rect x="991" y="782" width="7" height="6" fill="#f09a28"/>
<circle cx="1010" cy="782" r="5.500" fill="none" stroke="#1c9ad6" stroke-width="1.500"/><text x="1007.500" y="785.500" style="font-size:8px;font-weight:bold;fill:#1c9ad6">S</text>
<circle cx="1027" cy="782" r="5.500" fill="#bbb"/><rect x="1027" y="782" width="7" height="5" fill="#d22c3c"/>
<circle cx="1046" cy="782" r="5.500" fill="#f3d9c0" stroke="#c97a30"/><path d="M1043 779L1049 785M1049 779L1043 785" stroke="#444" stroke-width="1.300"/>
<path d="M1058 777L1064 775 1070 777V783Q1069 787 1064 789 1059 787 1058 783Z" fill="#1769c9"/><path d="M1067 783L1070.500 789H1063.500Z" fill="#f5c211"/>
<rect x="1079" y="778" width="12" height="8" rx="1" fill="none" stroke="#777"/><path d="M1081 780.500H1089M1081 783H1089" stroke="#999" stroke-dasharray="1 1"/>
<rect x="1107" y="776" width="4.500" height="9" rx="2.200" fill="none" stroke="#555"/><path d="M1105.500 783Q1106 787 1109 787T1113 783M1109 787V790" stroke="#555" fill="none"/>
<text x="1131" y="780" textLength="14" lengthAdjust="spacingAndGlyphs" style="font-size:10px;fill:#333">ESP</text><text x="1129.500" y="792" textLength="17" lengthAdjust="spacingAndGlyphs" style="font-size:10px;fill:#333">LAA</text>
<rect x="1161" y="777" width="9" height="9" fill="none" stroke="#444"/><path d="M1163 789H1169M1166 786V789" stroke="#444"/><rect x="1168" y="775" width="3" height="3" fill="#666"/>
<path d="M1179 780H1181L1184 777.500V786.500L1181 784H1179Z" fill="none" stroke="#555"/><path d="M1186 780Q1188 782 1186 784" stroke="#aaa" fill="none"/>
<rect x="1196" y="779" width="11" height="6.500" fill="#333"/><rect x="1207" y="781" width="1.500" height="2.500" fill="#333"/><path d="M1198 779L1199 775.500" stroke="#333"/>
<text x="1265" y="780" text-anchor="end" style="font-size:10.500px;fill:#333">09:45</text>
<text x="1265" y="792" text-anchor="end" style="font-size:10.500px;fill:#333">07/10/2022</text>
</svg>
</body></html>
